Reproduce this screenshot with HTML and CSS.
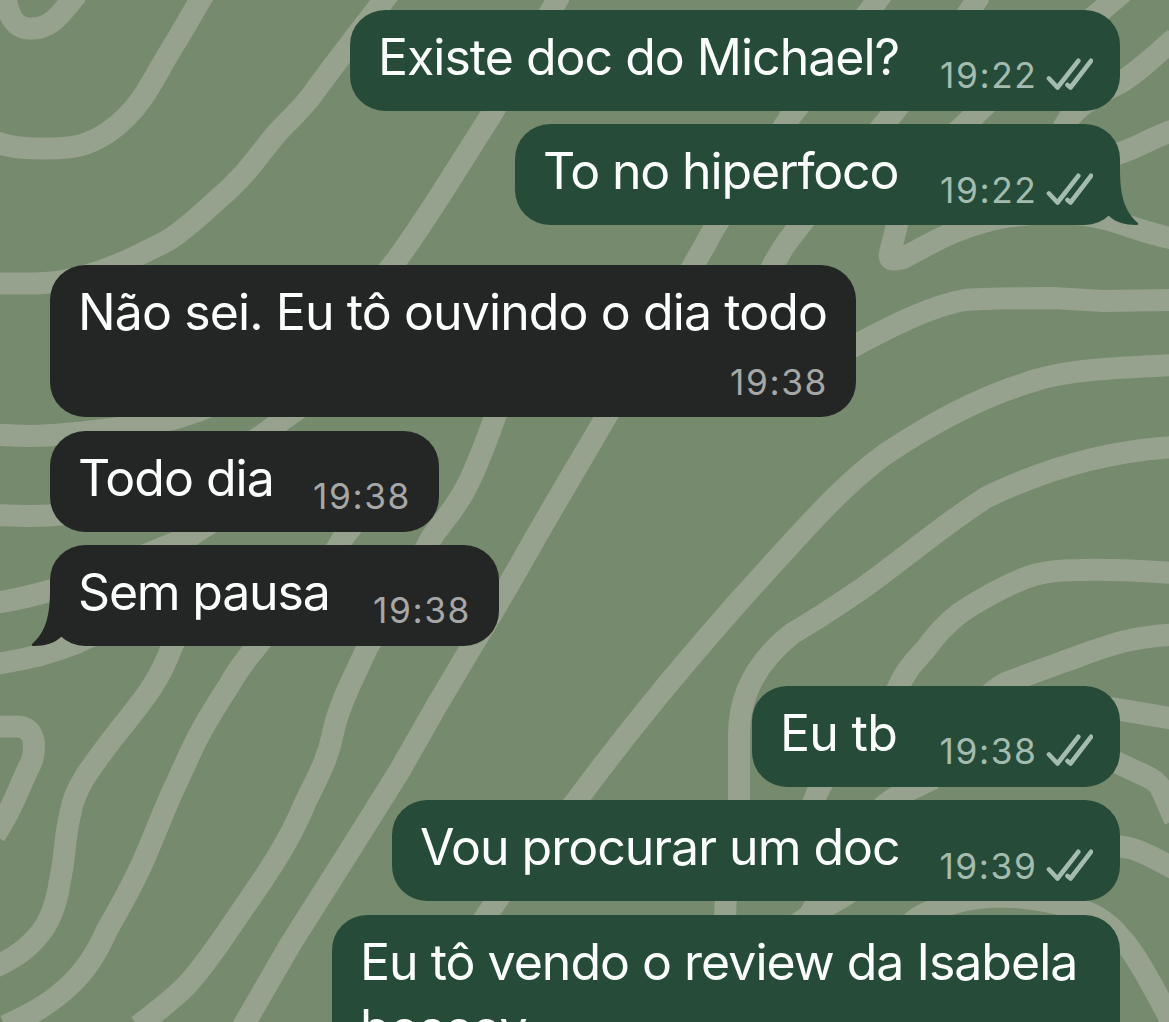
FILE: index.html
```html
<!DOCTYPE html>
<html lang="pt-BR">
<head>
<meta charset="utf-8">
<title>Conversa</title>
<link rel="stylesheet" href="styles.css">
</head>
<body>
<svg class="wallpaper" viewBox="0 0 1169 1022" aria-hidden="true">
  <path d="M5 -6C8 15 14 28.500 30 28.500C50 30 60 15 77 -6"/>
  <path d="M-5 142C10 147 20 148.500 45 148.500C75 149 88 145 107 133C122 123 134 110 143 97C155 79 165 58 177 40L205 -8"/>
  <path d="M-5 283.500H35C70 283 105 272 143 253C160 244 165 243 173 237C190 225 203 213 217 200C245 177 257 157 277 133C290 119 300 111 312 95C335 63 365 25 390 -8"/>
  <path d="M-5 434.500C15 436 40 437 65 434C110 430 150 425 180 417C270 390 350 320 395 262C430 215 465 155 490 117L560 -5"/>
  <path d="M-5 515C20 516 40 517 65 514C130 500 220 470 277 424C350 370 420 320 470 330C510 345 505 395 495 417C485 445 474 475 462 495C450 515 440 525 430 540C400 600 385 620 368 646C350 685 338 708 333 733C328 760 316 780 305 803C290 840 270 870 240 913C222 940 205 965 187 985C172 1000 155 1013 138 1026"/>
  <path d="M-5 603C35 597 90 580 120 565L187 538C260 490 370 440 385 465C385 490 360 515 343 538C320 580 285 610 257 646C245 660 236 673 228 687C215 707 205 723 195 743C185 764 178 780 170 797L145 857C133 885 120 907 107 930C97 953 84 972 70 985C50 1004 30 1015 5 1026"/>
  <path d="M-5 664C45 657 95 642 130 610C170 570 205 590 172 646C160 680 145 698 117 733C86 773 74 790 70 815C64 840 65 860 60 880C57 902 50 923 37 937C27 949 15 958 -5 967"/>
  <path d="M885 -10C840 50 815 85 790 117C760 165 725 205 705 245C665 315 635 365 602 424C575 470 545 520 520 565C500 600 485 625 472 646L437 705L400 770L350 850L290 945L242 1028"/>
  <path d="M980 -5C945 50 915 85 890 117C850 165 810 210 785 245C755 290 745 340 760 370C790 385 825 362 856 345C890 327 930 306 965 300C980 298 1020 298 1053 298L1103 301L1175 300"/>
  <path d="M1130 -14L1108 5C1060 45 1010 80 973 117C930 155 902 190 897 225L890 253Q887 263 903 258L937 240C955 231 975 223 1000 218C1040 211 1080 212 1109 220C1130 226 1145 233 1175 239"/>
  <path d="M1175 38C1150 60 1140 70 1120 83C1100 92 1080 105 1070 117C1050 145 1060 165 1080 165C1095 165 1105 158 1120 153C1140 147 1152 137 1175 130"/>
  <path d="M1175 365C1110 368 1065 370 1030 382C980 397 935 421 887 453C840 486 795 540 740 600C690 657 640 715 577 800C545 840 515 872 482 922"/>
  <path d="M1175 447C1105 451 1045 469 987 497C945 523 900 562 860 590C835 607 812 622 793 633C762 657 739 690 739 735V800C739 840 725 870 725 920"/>
  <path d="M1175 573C1140 571 1120 569 1080 570C1040 570 1025 577 1005 587C985 597 973 604 960 613C943 626 935 637 924 651C910 666 904 674 897 690C875 730 835 755 817 793L795 850"/>
  <path d="M1175 634.500C1125 637 1105 647 1060 663L1008 682C980 695 960 730 930 780L903 793C870 810 855 840 835 870L790 950"/>
  <path d="M1090 705C1110 708 1140 713 1175 719"/>
  <path d="M1090 750L1118 763L1148 777Q1160 783 1163 793L1175 820"/>
  <path d="M1100 846C1125 844 1140 851 1152 857L1175 869"/>
  <path d="M880 950C905 930 915 915 935 910C970 893 1020 893 1067 906C1087 910 1105 918 1120 937C1133 950 1140 965 1148 978L1172 1022"/>
  <path d="M770 950C785 930 805 918 823 908C850 893 870 880 890 860"/>
  <path d="M-5 726.500H18Q34 728 34 747Q34 759 28 769C18 790 12 810 -5 835"/>
</svg>
<svg class="defs" width="0" height="0" aria-hidden="true">
  <symbol id="ticks" viewBox="0 0 48 34"><path d="M4 20.500 12.500 29.500 33.300 2.800M22.500 27 25.500 29.500 46 2.800"/></symbol>
  <symbol id="tail" viewBox="0 0 44 56"><path d="M25 0C25 25 29 42 43 54Q44 56 41 56C30 56 20 53 14 47L0 30V0Z"/></symbol>
</svg>
<main class="chat">
  <section class="group out">
    <div class="msg w1"><p class="text">Existe doc do Michael?</p><span class="meta">19:22<svg class="ticks"><use href="#ticks"/></svg></span></div>
    <div class="msg w2"><p class="text">To no hiperfoco</p><span class="meta">19:22<svg class="ticks"><use href="#ticks"/></svg></span><svg class="tail"><use href="#tail"/></svg></div>
  </section>
  <section class="group in">
    <div class="msg tall w3"><p class="text">Não sei. Eu tô ouvindo o dia todo</p><span class="meta">19:38</span></div>
    <div class="msg w4"><p class="text">Todo dia</p><span class="meta">19:38</span></div>
    <div class="msg w5"><p class="text">Sem pausa</p><span class="meta">19:38</span><svg class="tail"><use href="#tail"/></svg></div>
  </section>
  <section class="group out">
    <div class="msg w6"><p class="text">Eu tb</p><span class="meta">19:38<svg class="ticks"><use href="#ticks"/></svg></span></div>
    <div class="msg w7"><p class="text">Vou procurar um doc</p><span class="meta">19:39<svg class="ticks"><use href="#ticks"/></svg></span></div>
    <div class="msg tall w8"><p class="text">Eu tô vendo o review da Isabela boscov</p></div>
  </section>
</main>
</body>
</html>
```
FILE: styles.css
```css
* { box-sizing: border-box; }
body {
  margin: 0;
  height: 1022px;
  overflow: hidden;
  background: #768a6d;
  color: #fcfffd;
  font-family: Inter, "Liberation Sans", sans-serif;
}
.wallpaper {
  position: absolute;
  inset: 0;
  width: 1169px;
  height: 1022px;
  fill: none;
  stroke: #96a28e;
  stroke-width: 22;
}
.defs { position: absolute; }
.chat {
  position: relative;
  display: flex;
  flex-direction: column;
  gap: 40px;
  height: 1022px;
  overflow: hidden;
  padding: 9.8px 49px 0 50px;
}
.group {
  display: flex;
  flex: none;
  flex-direction: column;
  gap: 13.4px;
}
.out { align-items: flex-end; }
.in { align-items: flex-start; }
.msg {
  position: relative;
  display: flex;
  justify-content: space-between;
  height: 101px;
  padding: 14px 27px 13.5px 28px;
  border-radius: 35px;
  background: #264c39;
  color: #fcfffd;
}
.in .msg {
  padding-right: 28px;
  background: #242625;
}
.text {
  margin: 0;
  font-size: 50px;
  line-height: 66px;
  letter-spacing: -1px;
  white-space: nowrap;
}
.meta {
  display: flex;
  align-items: flex-end;
  align-self: flex-end;
  color: #a4bcaf;
  font-size: 35.3px;
  line-height: 42px;
  letter-spacing: 1.6px;
}
.in .meta { color: #a6a7a7; }
.ticks {
  width: 48px;
  height: 34px;
  margin: 0 0 5px 7.5px;
  fill: none;
  stroke: currentColor;
  stroke-width: 4.6;
  stroke-linecap: round;
  stroke-linejoin: round;
}
.tail {
  position: absolute;
  right: -19px;
  bottom: 0;
  width: 44px;
  height: 56px;
  fill: #264c39;
}
.in .tail {
  right: auto;
  left: -19px;
  transform: scaleX(-1);
  fill: #242625;
}
.in .tall {
  flex-direction: column;
  height: 152px;
}
.out .tall { height: 220px; }
.out .tall .text { white-space: normal; }
.w1 { width: 770px; }
.w2 { width: 605px; }
.w2 .text { letter-spacing: -1.15px; }
.w3 { width: 806px; }
.w3 .text { letter-spacing: -0.9px; }
.w4 { width: 389px; }
.w5 { width: 449px; }
.w5 .text { letter-spacing: -1.2px; }
.w6 { width: 368px; }
.w6 .text { letter-spacing: -0.7px; }
.w7 { width: 728px; }
.w8 { width: 788px; }
```
